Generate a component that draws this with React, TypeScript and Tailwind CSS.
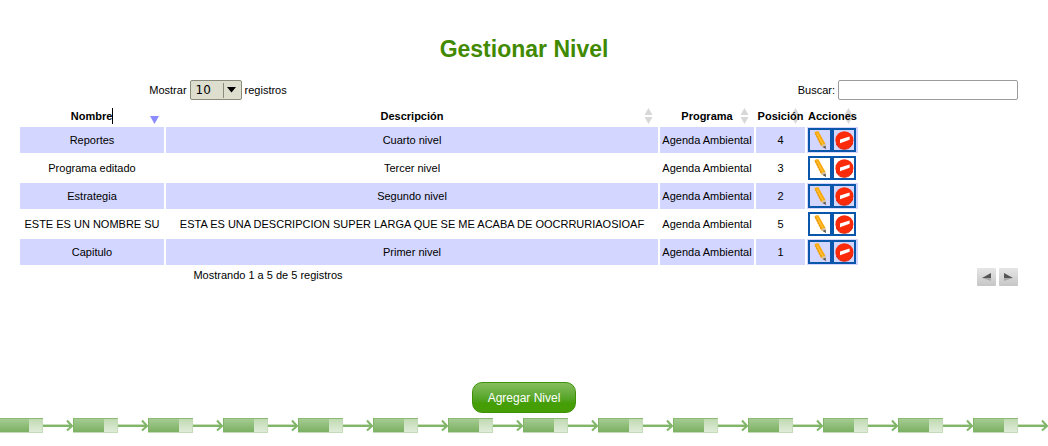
import { useState } from "react";

type Nivel = { nombre: string; descripcion: string; programa: string; posicion: number };

const niveles: Nivel[] = [
  { nombre: "Reportes", descripcion: "Cuarto nivel", programa: "Agenda Ambiental", posicion: 4 },
  { nombre: "Programa editado", descripcion: "Tercer nivel", programa: "Agenda Ambiental", posicion: 3 },
  { nombre: "Estrategia", descripcion: "Segundo nivel", programa: "Agenda Ambiental", posicion: 2 },
  {
    nombre: "ESTE ES UN NOMBRE SU",
    descripcion: "ESTA ES UNA DESCRIPCION SUPER LARGA QUE SE ME ACABA DE OOCRRURIAOSIOAF",
    programa: "Agenda Ambiental",
    posicion: 5,
  },
  { nombre: "Capitulo", descripcion: "Primer nivel", programa: "Agenda Ambiental", posicion: 1 },
];

const columnas = ["Nombre", "Descripción", "Programa", "Posición", "Acciones"];

function SortIcon({ active }: { active: boolean }) {
  return (
    <svg viewBox="0 0 9 16" className="absolute right-[5px] top-0 h-4 w-[9px]" aria-hidden="true">
      {active ? (
        <path d="M0 8h9L4.5 16z" fill="#8c8cff" />
      ) : (
        <>
          <path d="M0.5 7h8L4.5 0z" fill="#d8d8d8" />
          <path d="M0.5 9h8L4.5 16z" fill="#d8d8d8" />
        </>
      )}
    </svg>
  );
}

function PencilIcon() {
  return (
    <svg viewBox="0 0 20 20" className="h-5 w-5" aria-hidden="true">
      <path d="M4.4 2.6Q5.8 0.8 8.4 1.2L15.2 13.6 15.8 18.6 11 16z" fill="#f9a60a" />
      <path d="M6.6 2.6 13.2 15" stroke="#ffc030" strokeWidth="1.6" />
      <path d="M5.2 4.6l1.4-.6M6.4 7l1.4-.6M7.6 9.4l1.4-.6M8.8 11.8l1.4-.6M10 14.2l1.4-.6" stroke="#d98200" strokeWidth=".8" />
      <path d="M10.8 15.8 15.2 13.4 15.9 18.8z" fill="#cfc3ae" />
      <path d="M12.6 17 15.5 15.8 16 19z" fill="#555" />
    </svg>
  );
}

function RemoveIcon() {
  return (
    <svg viewBox="0 0 20 20" className="h-5 w-5" aria-hidden="true">
      <circle cx="10.4" cy="10.2" r="9" fill="#fb2b0a" />
      <path d="M2.4 14a8.6 8.6 0 0 0 16.2-1" fill="none" stroke="#d8200a" strokeWidth="1" />
      <path d="M6 9.4 15.6 6.4V9.8L6 13.2z" fill="#fff" />
    </svg>
  );
}

function ArrowStrip() {
  return (
    <svg className="block h-4 w-full" aria-hidden="true">
      <defs>
        <linearGradient id="dark" x1="0" y1="0" x2="0" y2="1">
          <stop offset="0" stopColor="#a5cb92" />
          <stop offset="1" stopColor="#7bb062" />
        </linearGradient>
        <linearGradient id="light" x1="0" y1="0" x2="0" y2="1">
          <stop offset="0" stopColor="#c0dab2" />
          <stop offset="1" stopColor="#dfecd8" />
        </linearGradient>
        <pattern id="strip" x="-2" y="0" width="75" height="16" patternUnits="userSpaceOnUse">
          <rect width="45" height="15" fill="#c3dcb7" />
          <rect width="45" height="1" fill="#8aba73" />
          <rect y="1" width="31" height="13" fill="url(#dark)" />
          <rect width="1" height="14" fill="#7fb567" />
          <rect x="31" y="1" width="13" height="13" fill="url(#light)" />
          <rect x="45" y="6" width="29" height="1" fill="#c9dfbe" />
          <rect x="45" y="7" width="29" height="2" fill="#81b669" />
          <path d="M69 2.5 74 8 69 12.5" fill="none" stroke="#81b669" strokeWidth="2" />
        </pattern>
      </defs>
      <rect width="100%" height="16" fill="url(#strip)" />
    </svg>
  );
}

const pagerClass =
  "flex h-[18px] w-[19px] items-center justify-center rounded-[1px] bg-linear-to-b from-[#e6e6e6] to-[#c6c6c6]";

export default function App() {
  const [registros, setRegistros] = useState("10");
  const [busqueda, setBusqueda] = useState("");

  return (
    <div className="bg-white font-['Liberation_Sans',Arial,sans-serif] text-[11px] leading-4 text-black">
      <main className="pt-[33px]">
        <h1 className="text-center text-[23px] leading-8 font-bold text-[#418a00]">Gestionar Nivel</h1>

        <section className="mt-[15px] pr-[30px] pl-[18px]">
          <div className="flex h-5 items-center justify-between">
            <div className="flex w-2/5 items-center justify-center gap-[3px]">
              <label htmlFor="registros">Mostrar</label>
              <div className="relative">
                <select
                  id="registros"
                  value={registros}
                  onChange={(e) => setRegistros(e.target.value)}
                  className="block h-5 w-[52px] appearance-none rounded-[2px] border border-[#8b8b7c] bg-[#dedecf] pl-[5px] font-['DejaVu_Sans',sans-serif] text-[12px] leading-4"
                >
                  <option>10</option>
                  <option>25</option>
                  <option>50</option>
                  <option>100</option>
                </select>
                <svg viewBox="0 0 20 20" className="pointer-events-none absolute top-0 right-0 h-5 w-5" aria-hidden="true">
                  <path d="M1.5 3v15" stroke="#8b8b7c" />
                  <path d="M5 7h9l-4.5 5.5z" fill="#000" />
                </svg>
              </div>
              <label htmlFor="registros">registros</label>
            </div>
            <div className="flex items-center gap-[3px]">
              <label htmlFor="buscar">Buscar:</label>
              <input
                id="buscar"
                type="text"
                value={busqueda}
                onChange={(e) => setBusqueda(e.target.value)}
                className="h-5 w-[180px] rounded-[2px] border border-[#9c9c9c] bg-white px-1 outline-none"
              />
            </div>
          </div>

          <table className="mt-[5px] w-[842px] table-fixed border-separate border-spacing-x-[2px] border-spacing-y-[2px] text-center whitespace-nowrap">
            <colgroup>
              <col className="w-[144px]" />
              <col />
              <col className="w-[94px]" />
              <col className="w-[49px]" />
              <col className="w-[51px]" />
            </colgroup>
            <thead>
              <tr>
                {columnas.map((c, i) => (
                  <th key={c} scope="col" className="h-[18px] p-0 font-bold">
                    <div className="relative">
                      <SortIcon active={i === 0} />
                      <span className={i === 0 ? "relative inline-block border-r border-black" : "relative"}>{c}</span>
                    </div>
                  </th>
                ))}
              </tr>
            </thead>
            <tbody>
              {niveles.map((n) => (
                <tr key={n.nombre} className="h-[26px] odd:bg-[#d3d6ff]">
                  <td className="p-0">{n.nombre}</td>
                  <td className="p-0">{n.descripcion}</td>
                  <td className="p-0">{n.programa}</td>
                  <td className="p-0">{n.posicion}</td>
                  <td className="p-0">
                    <div className="flex pl-px">
                      <button type="button" aria-label={`Editar ${n.nombre}`} className="h-6 w-6 border-2 border-[#0a56ab]">
                        <PencilIcon />
                      </button>
                      <button type="button" aria-label={`Eliminar ${n.nombre}`} className="h-6 w-6 border-2 border-[#0a56ab]">
                        <RemoveIcon />
                      </button>
                    </div>
                  </td>
                </tr>
              ))}
            </tbody>
          </table>

          <div className="flex items-start justify-between">
            <p className="w-1/2 text-center">Mostrando 1 a 5 de 5 registros</p>
            <div className="flex gap-[3px] pt-px">
              <button type="button" aria-label="Anterior" className={pagerClass}>
                <svg viewBox="0 0 9 8" className="h-2 w-[9px]" aria-hidden="true">
                  <path d="M0 5 9 0V5z" fill="#555" />
                  <path d="M0 5H9V8z" fill="#aaa" />
                </svg>
              </button>
              <button type="button" aria-label="Siguiente" className={pagerClass}>
                <svg viewBox="0 0 9 8" className="h-2 w-[9px]" aria-hidden="true">
                  <path d="M9 5 0 0V5z" fill="#555" />
                  <path d="M9 5H0V8z" fill="#aaa" />
                </svg>
              </button>
            </div>
          </div>
        </section>

        <div className="mt-24 flex justify-center">
          <button
            type="button"
            className="h-[31px] rounded-[10px] border border-[#3f9208] bg-linear-to-b from-[#85bd5c] to-[#459e05] to-70% px-[15px] text-[12px] text-white"
          >
            Agregar Nivel
          </button>
        </div>
      </main>
      <footer className="pt-[5px]">
        <ArrowStrip />
      </footer>
    </div>
  );
}
